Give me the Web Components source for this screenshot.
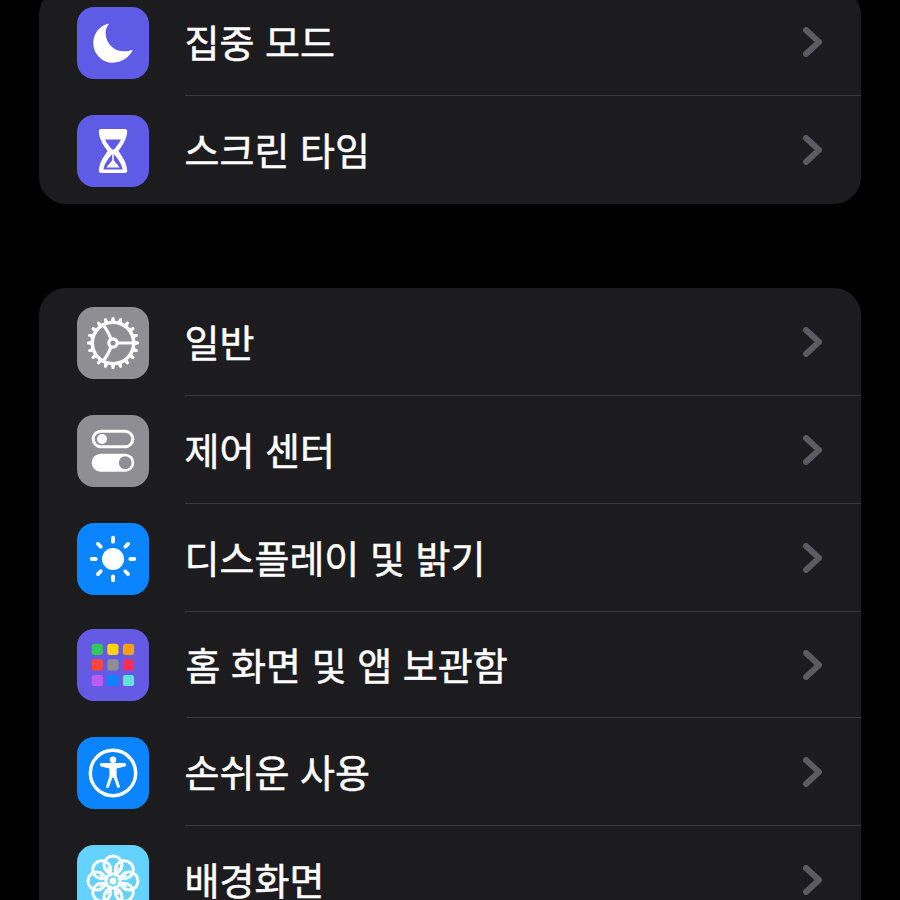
<!DOCTYPE html>
<html lang="ko">
<head>
<meta charset="utf-8">
<title>설정</title>
<style>
  html, body { margin: 0; background: #000; }
  body { height: 900px; overflow: hidden; font-family: "Noto Sans CJK KR", "Noto Sans", sans-serif; color: #fff; }
  /* the list is scrolled, first row is cut by the top of the window */
  settings-list { margin-top: -12px; }
</style>
</head>
<body>
<settings-list>
  <settings-group>
    <settings-row label="집중 모드"><app-icon glyph="moon" color="#5e5ce6"></app-icon></settings-row>
    <settings-row label="스크린 타임" last><app-icon glyph="hourglass" color="#5e5ce6"></app-icon></settings-row>
  </settings-group>
  <settings-group>
    <settings-row label="일반"><app-icon glyph="gear" color="#8e8e93"></app-icon></settings-row>
    <settings-row label="제어 센터"><app-icon glyph="toggles" color="#8e8e93"></app-icon></settings-row>
    <settings-row label="디스플레이 및 밝기"><app-icon glyph="sun" color="#0a84ff"></app-icon></settings-row>
    <settings-row label="홈 화면 및 앱 보관함" tight><app-icon glyph="apps" color="#645ae4"></app-icon></settings-row>
    <settings-row label="손쉬운 사용"><app-icon glyph="access" color="#0a84ff"></app-icon></settings-row>
    <settings-row label="배경화면"><app-icon glyph="flower" color="#64d2ff"></app-icon></settings-row>
  </settings-group>
</settings-list>

<script>
  function gearPath() {
    const teeth = 20, cx = 36, cy = 36, out = 26, root = 22.4;
    const step = (Math.PI * 2) / teeth;
    let d = "";
    for (let i = 0; i < teeth; i++) {
      const a = i * step - Math.PI / 2;
      const pts = [[root, -0.5], [root, -0.3], [out, -0.14], [out, 0.14], [root, 0.3], [root, 0.5]];
      for (const [r, k] of pts) {
        const x = cx + r * Math.cos(a + k * step);
        const y = cy + r * Math.sin(a + k * step);
        d += (d ? "L" : "M") + x.toFixed(2) + " " + y.toFixed(2);
      }
    }
    return d + "Z";
  }

  function appsGrid() {
    const colors = ["#34c759", "#ffd60a", "#ff9f0a", "#ff453a", "#8e8e93", "#ff2d55", "#bf5af2", "#0a84ff", "#66e0da"];
    return colors.map((c, i) => {
      const x = 14.7 + (i % 3) * 15.6;
      const y = 14.7 + Math.floor(i / 3) * 15.6;
      return `<rect x="${x}" y="${y}" width="11.2" height="11.2" rx="2.6" fill="${c}"/>`;
    }).join("");
  }

  function rays(n, r1, r2, w) {
    let s = "";
    for (let i = 0; i < n; i++) {
      s += `<line x1="36" y1="${36 - r1}" x2="36" y2="${36 - r2}" stroke="#fff" stroke-width="${w}" stroke-linecap="round" transform="rotate(${i * 360 / n} 36 36)"/>`;
    }
    return s;
  }

  function flower() {
    let s = "";
    for (let i = 0; i < 8; i++) {
      s += `<circle cx="36" cy="20" r="9" fill="none" stroke="#fff" stroke-width="3" transform="rotate(${i * 45} 36 36)"/>`;
      s += `<line x1="36" y1="31" x2="36" y2="21" stroke="#fff" stroke-width="1.8" transform="rotate(${i * 45 + 22.5} 36 36)"/>`;
    }
    return s + `<circle cx="36" cy="36" r="3.4" fill="#fff"/>`;
  }

  const GLYPHS = {
    moon: () => `<path fill="#fff" d="M30.6 16.7C22.3 19.1 16.3 26.8 16.3 35.9C16.3 46.9 25.1 55.7 36.1 55.7C44.4 55.7 51.8 50.6 55.6 43.6C55.2 43 54.6 43 54 43.2C52 43.9 49.6 44.3 47 44.3C36.8 44.3 28.6 36.1 28.6 25.9C28.6 23.3 29.3 20.2 31.3 18C31.8 17.4 31.4 16.6 30.6 16.7Z"/>`,
    hourglass: () => `<path fill="#fff" fill-rule="evenodd" d="M24 14H48C49.4 14 50.3 15 50.2 16.4C49.8 24.2 45.2 30.8 41.4 36C45.2 41.2 49.8 47.8 50.2 55.6C50.3 57 49.4 58 48 58H24C22.6 58 21.7 57 21.8 55.6C22.2 47.8 26.8 41.2 30.6 36C26.8 30.8 22.2 24.2 21.8 16.4C21.7 15 22.6 14 24 14ZM28 24.5C30 28.6 33.4 32.4 35 34.6H37C38.6 32.4 42 28.6 44 24.5ZM35.2 39C32 42.6 27.6 48 26.4 54.4H45.6C44.4 48 40 42.6 36.8 39V45.2C39 48.4 41.4 50.4 42.6 52.4H29.4C30.6 50.4 33 48.4 35.2 45.2Z"/>`,
    gear: () => `<path fill="#fff" fill-rule="evenodd" d="${gearPath()}M36 17A19 19 0 1 0 36 55A19 19 0 1 0 36 17Z"/>
      <g stroke="#fff" stroke-width="3.2" fill="none"><line x1="39.5" y1="36" x2="56" y2="36"/><path d="M34.2 33C32 26 29.5 22 26 18"/><path d="M34.2 39C32 46 29.5 50 26 54"/><circle cx="36" cy="36" r="4.2"/></g>`,
    toggles: () => `<rect x="16.2" y="16.2" width="39.6" height="15.6" rx="7.8" fill="none" stroke="#fff" stroke-width="3"/><circle cx="25" cy="24" r="5" fill="#fff"/>
      <rect x="14.7" y="38.7" width="42.6" height="18" rx="9" fill="#fff"/><circle cx="48.2" cy="47.7" r="6.4" fill="#8e8e93"/>`,
    sun: () => `<circle cx="36" cy="36" r="11" fill="#fff"/>` + rays(8, 17.3, 21.3, 3.8),
    apps: () => appsGrid(),
    access: () => `<circle cx="36" cy="36" r="22.7" fill="none" stroke="#fff" stroke-width="3.4"/><circle cx="36" cy="22.7" r="3.3" fill="#fff"/>
      <path fill="#fff" d="M24.5 26H47.5C48.6 26 49.2 27 49.2 27.8C49.2 28.6 48.6 29.2 47.8 29.4L39.6 31.5V39L42.8 49.2C43 50.1 42.6 50.7 41.8 50.9C41 51.1 40.3 50.7 40 49.9L36.8 41H35.2L32 49.9C31.7 50.7 31 51.1 30.2 50.9C29.4 50.7 29 50.1 29.2 49.2L32.4 39V31.5L24.2 29.4C23.4 29.2 22.8 28.6 22.8 27.8C22.8 27 23.4 26 24.5 26Z"/>`,
    flower: () => flower()
  };

  class SettingsList extends HTMLElement {
    constructor() {
      super();
      this.attachShadow({ mode: "open" });
      this.shadowRoot.innerHTML = `
        <style>
          :host { display: flex; flex-direction: column; gap: 84px; padding: 0 39px; }
        </style>
        <slot></slot>
      `;
    }
  }

  class SettingsGroup extends HTMLElement {
    constructor() {
      super();
      this.attachShadow({ mode: "open" });
      this.shadowRoot.innerHTML = `
        <style>
          :host { display: block; background: #1c1c1e; border-radius: 27px; overflow: hidden; }
        </style>
        <slot></slot>
      `;
    }
  }

  class SettingsRow extends HTMLElement {
    constructor() {
      super();
      this.attachShadow({ mode: "open" });
    }

    connectedCallback() {
      const label = this.getAttribute("label");
      this.shadowRoot.innerHTML = `
        <style>
          :host { display: grid; grid-template-columns: 146px 1fr; height: 108px; box-sizing: border-box; }
          :host([tight]) { height: 106px; }
          .lead { display: flex; align-items: center; padding-left: 38px; padding-top: 2px; }
          :host([tight]) .lead { padding-top: 0; }
          .main { display: flex; align-items: center; justify-content: space-between; border-bottom: 1px solid #3a3a3c; padding-right: 39px; }
          :host([last]) .main { border-bottom: none; }
          :host([tight]) .main { margin-left: 2px; }
          .label { font-size: 38px; font-weight: 400; line-height: 48px; margin: 0 0 2px -0.5px; white-space: nowrap; -webkit-text-stroke: 0.5px #fff; }
          :host([tight]) .label { margin-left: -1.5px; }
          svg { width: 19px; height: 30px; display: block; }
        </style>
        <div class="lead"><slot></slot></div>
        <div class="main">
          <span class="label">${label}</span>
          <svg viewBox="0 0 19 30"><path d="M3 3L16 15L3 27" fill="none" stroke="#5b5b60" stroke-width="6" stroke-linecap="round" stroke-linejoin="round"/></svg>
        </div>
      `;
    }
  }

  class AppIcon extends HTMLElement {
    constructor() {
      super();
      this.attachShadow({ mode: "open" });
    }

    connectedCallback() {
      const glyph = this.getAttribute("glyph");
      this.shadowRoot.innerHTML = `
        <style>
          :host { display: block; width: 72px; height: 72px; border-radius: 17px; background: ${this.getAttribute("color")}; overflow: hidden; }
          svg { display: block; width: 72px; height: 72px; }
        </style>
        <svg viewBox="0 0 72 72">${GLYPHS[glyph]()}</svg>
      `;
    }
  }

  customElements.define("settings-list", SettingsList);
  customElements.define("settings-group", SettingsGroup);
  customElements.define("settings-row", SettingsRow);
  customElements.define("app-icon", AppIcon);
</script>
</body>
</html>
